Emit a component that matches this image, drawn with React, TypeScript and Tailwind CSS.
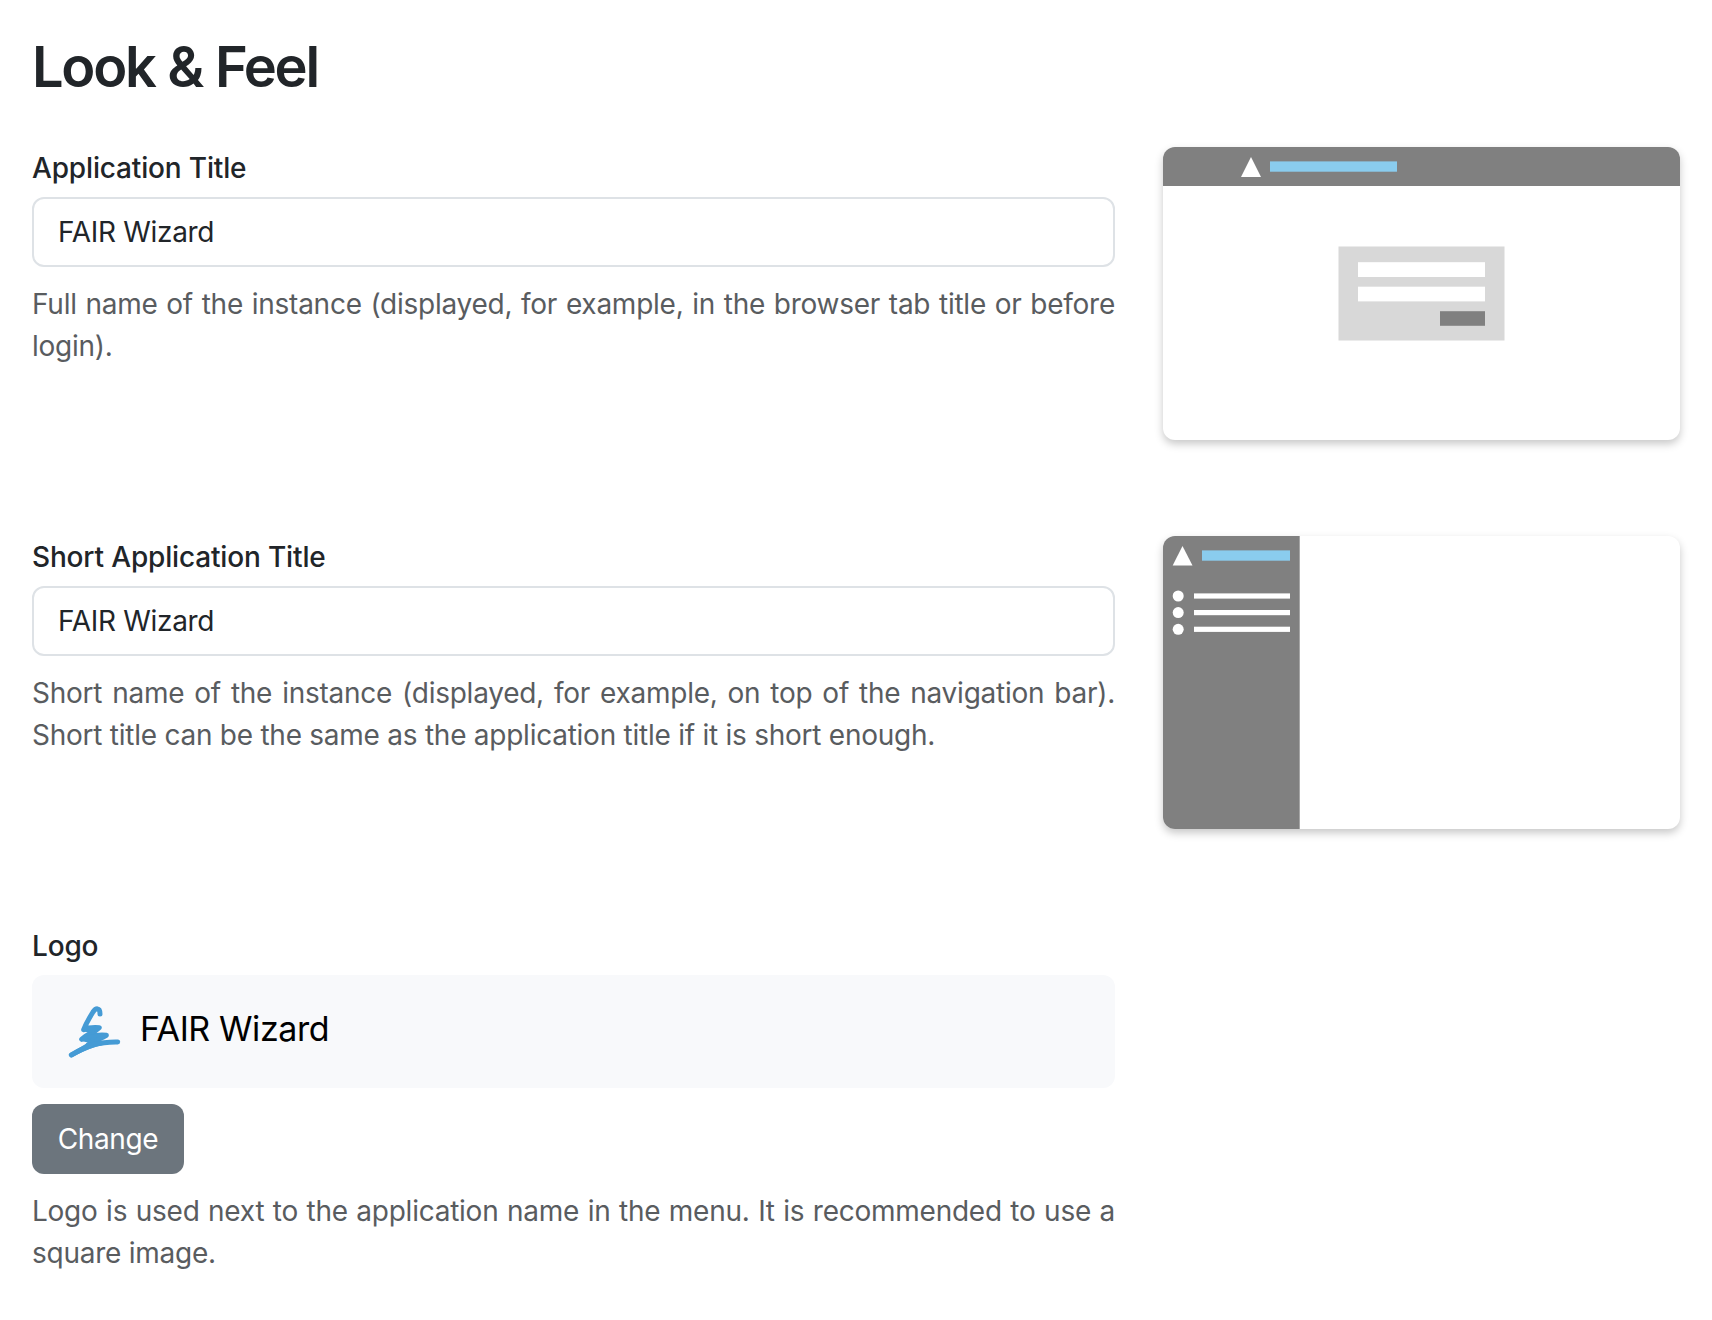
import type { ReactNode } from "react";

function LoginPreview() {
  return (
    <svg width="517" height="293" viewBox="0 0 517 293" className="block">
      <rect width="517" height="39" fill="#808080" />
      <path d="M88 10L98 30H78Z" fill="#fff" />
      <rect x="107" y="14.4" width="127" height="10.3" fill="#8accee" />
      <rect x="175.5" y="99.5" width="166" height="94" fill="#d8d8d8" />
      <rect x="195" y="115.2" width="127" height="14.8" fill="#fff" />
      <rect x="195" y="139.7" width="127" height="14.7" fill="#fff" />
      <rect x="277" y="164.2" width="45" height="14.6" fill="#808080" />
    </svg>
  );
}

function SidebarPreview() {
  return (
    <svg width="517" height="293" viewBox="0 0 517 293" className="block">
      <rect width="136.7" height="293" fill="#808080" />
      <path d="M19.5 10L29.5 29.5H9.7Z" fill="#fff" />
      <rect x="39" y="14.4" width="88" height="10.3" fill="#8accee" />
      {[60, 76.6, 93.3].map((y) => (
        <g key={y} fill="#fff">
          <circle cx="15.2" cy={y} r="5.5" />
          <rect x="31" y={y - 2.6} width="96" height="5.2" />
        </g>
      ))}
    </svg>
  );
}

function Field({ label, height, children, preview }: { label: string; height: string; children: ReactNode; preview?: ReactNode }) {
  return (
    <section className={`flex items-start gap-12 ${height}`}>
      <div className="w-[1083px]">
        <div className="h-[50px] text-[28px] leading-[42px] font-medium tracking-[-0.16px]">{label}</div>
        {children}
      </div>
      {preview && (
        <div className="w-[517px] overflow-hidden rounded-xl bg-white shadow-[0_4px_8px_rgba(0,0,0,0.22)]">{preview}</div>
      )}
    </section>
  );
}

function TextInput({ value }: { value: string }) {
  return (
    <input
      readOnly
      value={value}
      className="block h-[70px] w-full rounded-xl border-2 border-[#dee2e6] bg-white px-6 text-[28px] tracking-[-0.3px] outline-none"
    />
  );
}

function Help({ children }: { children: ReactNode }) {
  return <p className="mt-4 text-justify text-[28px] leading-[42px] tracking-[-0.25px] text-[#595c5f]">{children}</p>;
}

export default function App() {
  return (
    <main className="h-[1320px] w-[1712px] overflow-hidden bg-white px-8 pt-8 font-['Inter',sans-serif] text-[#212529]">
      <h1 className="mb-12 h-[67px] text-[56px] leading-[70px] font-semibold tracking-[-2.3px] [word-spacing:1px]">Look &amp; Feel</h1>
      <Field label="Application Title" height="h-[389px]" preview={<LoginPreview />}>
        <TextInput value="FAIR Wizard" />
        <Help>Full name of the instance (displayed, for example, in the browser tab title or before login).</Help>
      </Field>
      <Field label="Short Application Title" height="h-[389px]" preview={<SidebarPreview />}>
        <TextInput value="FAIR Wizard" />
        <Help>
          Short name of the instance (displayed, for example, on top of the navigation bar). Short title can be the same as the application title if it is short enough.
        </Help>
      </Field>
      <Field label="Logo" height="h-[380px]">
        <div className="flex h-[113px] items-center rounded-xl bg-[#f8f9fb] pb-[3px] pl-7 text-black">
          <svg width="70" height="70" viewBox="0 0 210 210" fill="none" stroke="#459bd5" strokeWidth="15" strokeLinecap="round" strokeLinejoin="round">
            <path d="M120 57C120 36 107 39 99 51C89 67 78 86 71 104C84 98 106 97 118 98C106 111 82 117 65 133C89 122 122 118 139 121C124 130 103 138 84 150" />
            <path d="M71 104C84 98 106 97 118 98L90 108Z M65 133C89 122 122 118 139 121L100 139L84 148L88 138Z" fill="#459bd5" strokeWidth="10" />
            <path d="M34 180C82 151 120 140 173 141" />
            <path d="M34 180C72 160 98 148 126 144L84 150Z" fill="#459bd5" strokeWidth="13" />
          </svg>
          <span className="ml-[10px] pb-[2px] text-[34px] leading-none tracking-[-0.4px]">FAIR Wizard</span>
        </div>
        <button className="mt-4 block h-[70px] w-[152px] rounded-xl bg-[#6c757d] text-[28px] tracking-[-0.4px] text-white">Change</button>
        <Help>Logo is used next to the application name in the menu. It is recommended to use a square image.</Help>
      </Field>
    </main>
  );
}
